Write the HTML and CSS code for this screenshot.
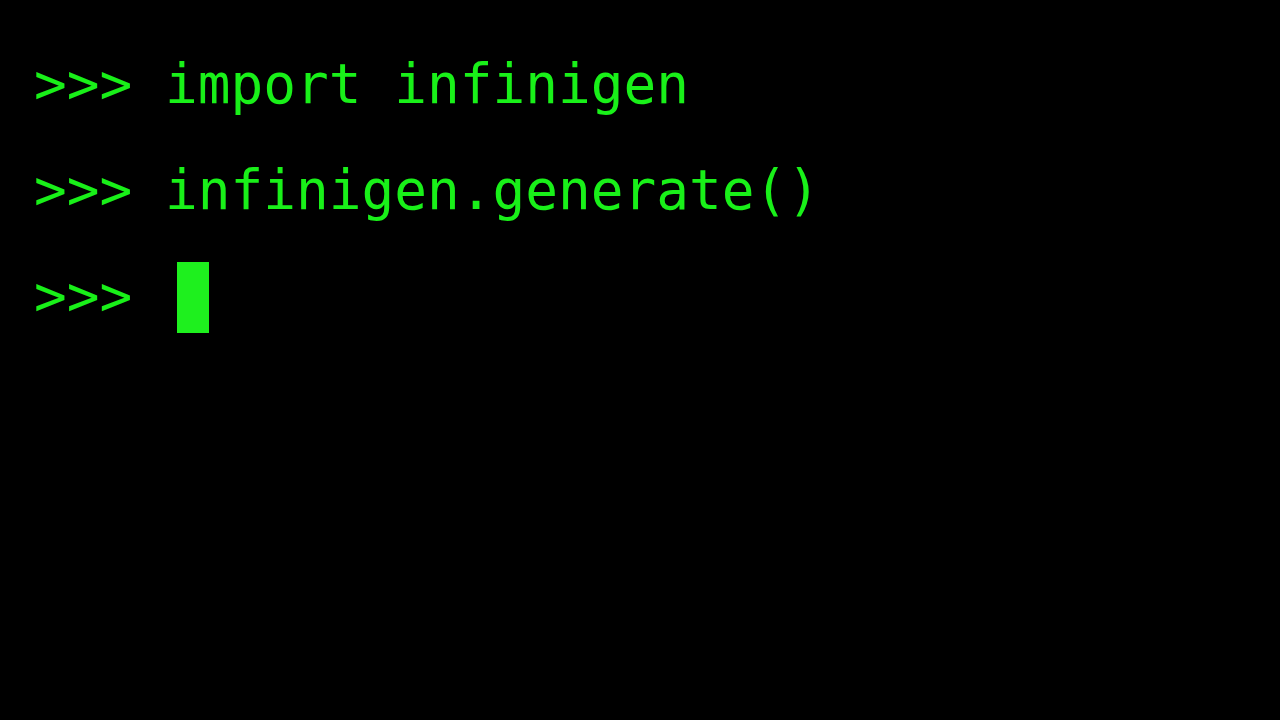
FILE: index.html
```html
<!DOCTYPE html>
<html>
<head>
<meta charset="utf-8">
<link rel="stylesheet" href="styles.css">
</head>
<body>
<main class="term">
<div class="line">&gt;&gt;&gt; import infinigen</div>
<div class="line">&gt;&gt;&gt; infinigen.generate()</div>
<div class="line">&gt;&gt;&gt; <span class="cursor"></span></div>
</main>
</body>
</html>
```
FILE: styles.css
```css
html, body {
  margin: 0;
  background: #000;
  height: 100%;
}
.term {
  padding: 32px 0 0 34px;
  font-family: "DejaVu Sans Mono", "Liberation Mono", monospace;
  font-size: 54.4px;
  line-height: 106px;
  color: #19f019;
}
.line {
  white-space: pre;
}
.cursor {
  display: inline-block;
  width: 32px;
  height: 71px;
  margin-left: 12px;
  background: #1ef01e;
  vertical-align: -18px;
}
```
